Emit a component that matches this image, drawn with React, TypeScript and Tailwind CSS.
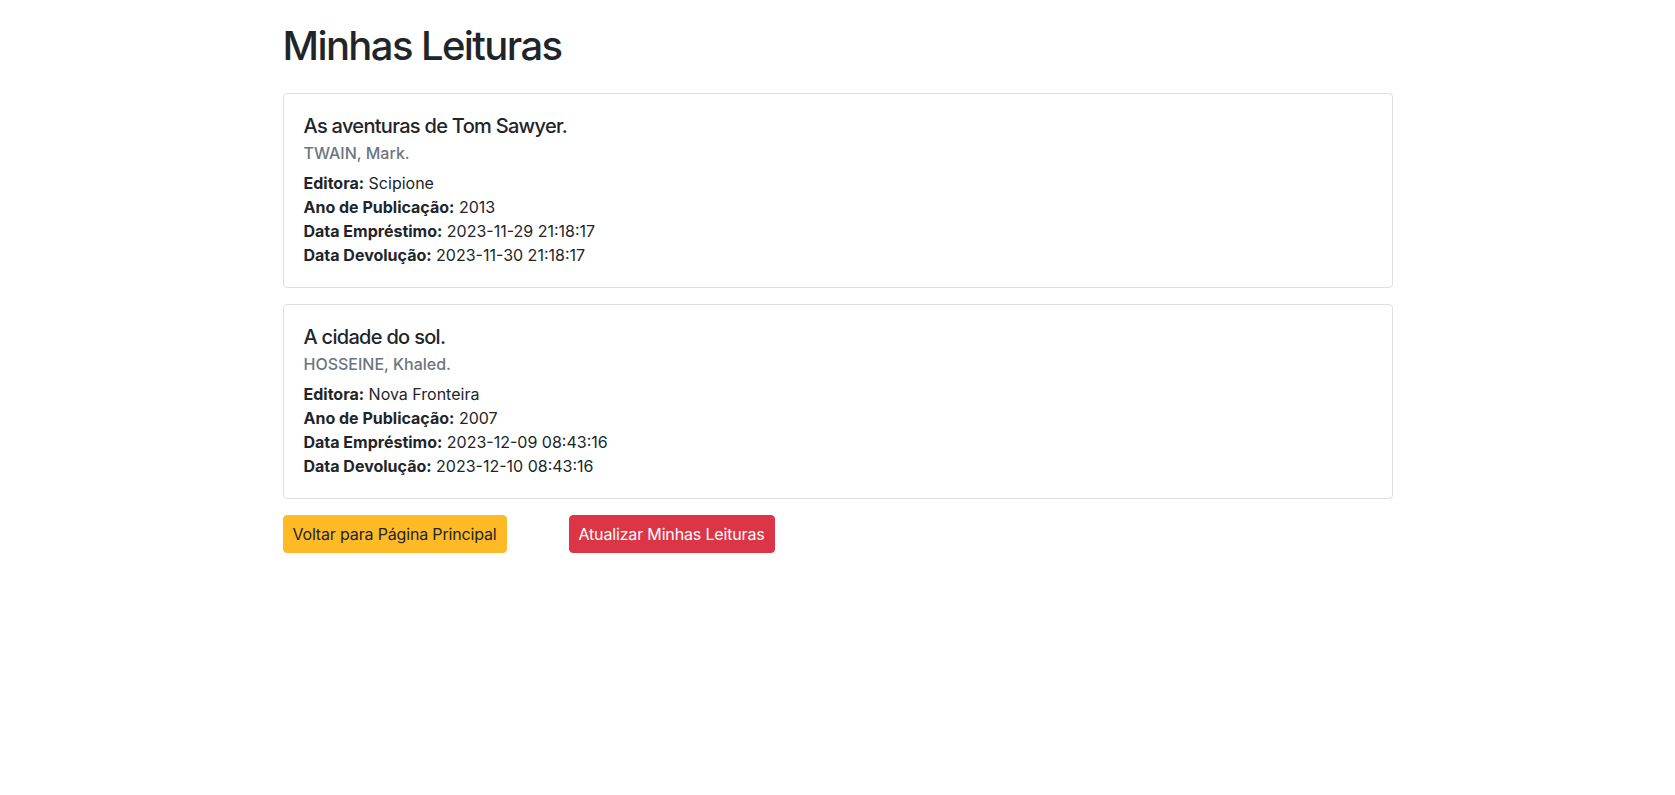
import React from "react";

type Leitura = {
  titulo: string;
  autor: string;
  editora: string;
  ano: string;
  emprestimo: string;
  devolucao: string;
};

const LEITURAS: Leitura[] = [
  {
    titulo: "As aventuras de Tom Sawyer.",
    autor: "TWAIN, Mark.",
    editora: "Scipione",
    ano: "2013",
    emprestimo: "2023-11-29 21:18:17",
    devolucao: "2023-11-30 21:18:17",
  },
  {
    titulo: "A cidade do sol.",
    autor: "HOSSEINE, Khaled.",
    editora: "Nova Fronteira",
    ano: "2007",
    emprestimo: "2023-12-09 08:43:16",
    devolucao: "2023-12-10 08:43:16",
  },
];

function LeituraCard({ leitura }: { leitura: Leitura }) {
  return (
    <div className="mb-4 rounded-[4px] border border-[#dfdfdf] bg-white">
      <div className="p-5">
        {/* Title + author */}
        <h5 className="mb-3 text-[20px] font-medium leading-[24px] tracking-[-0.035em]">
          {leitura.titulo}
        </h5>
        <h6 className="-mt-[6px] mb-2 text-[16px] font-medium leading-[19.2px] text-[#6c757d]">
          {leitura.autor}
        </h6>
        <p className="text-[16px] leading-[24px]">
          <strong className="font-bold">Editora:</strong> {leitura.editora}
        </p>
        <p className="text-[16px] leading-[24px]">
          <strong className="font-bold">Ano de Publicação:</strong> {leitura.ano}
        </p>
        <p className="text-[16px] leading-[24px]">
          <strong className="font-bold">Data Empréstimo:</strong> {leitura.emprestimo}
        </p>
        <p className="text-[16px] leading-[24px]">
          <strong className="font-bold">Data Devolução:</strong> {leitura.devolucao}
        </p>
      </div>
    </div>
  );
}

export default function App() {
  return (
    <div
      className="min-h-screen bg-white text-[#212529]"
      style={{ fontFamily: "Inter, 'Noto Sans', sans-serif" }}
    >
      <div className="mx-auto w-[1140px] px-[15px] pt-[22px]">
        <h1 className="mb-[23px] text-[40px] font-medium leading-[48px] tracking-[-0.04em]">
          Minhas Leituras
        </h1>

        {LEITURAS.map((l) => (
          <LeituraCard key={l.titulo} leitura={l} />
        ))}

        {/* Actions */}
        <div className="flex items-center gap-[62px]">
          <button className="flex h-[38px] w-[224px] items-center justify-center rounded-[4px] border border-[#ffba26] bg-[#ffba26] text-[16px] leading-[24px] tracking-[-0.01em] text-[#212529]">
            Voltar para Página Principal
          </button>
          <button className="flex h-[38px] w-[206px] items-center justify-center rounded-[4px] border border-[#dc3545] bg-[#dc3545] text-[16px] leading-[24px] tracking-[-0.01em] text-white">
            Atualizar Minhas Leituras
          </button>
        </div>
      </div>
    </div>
  );
}
